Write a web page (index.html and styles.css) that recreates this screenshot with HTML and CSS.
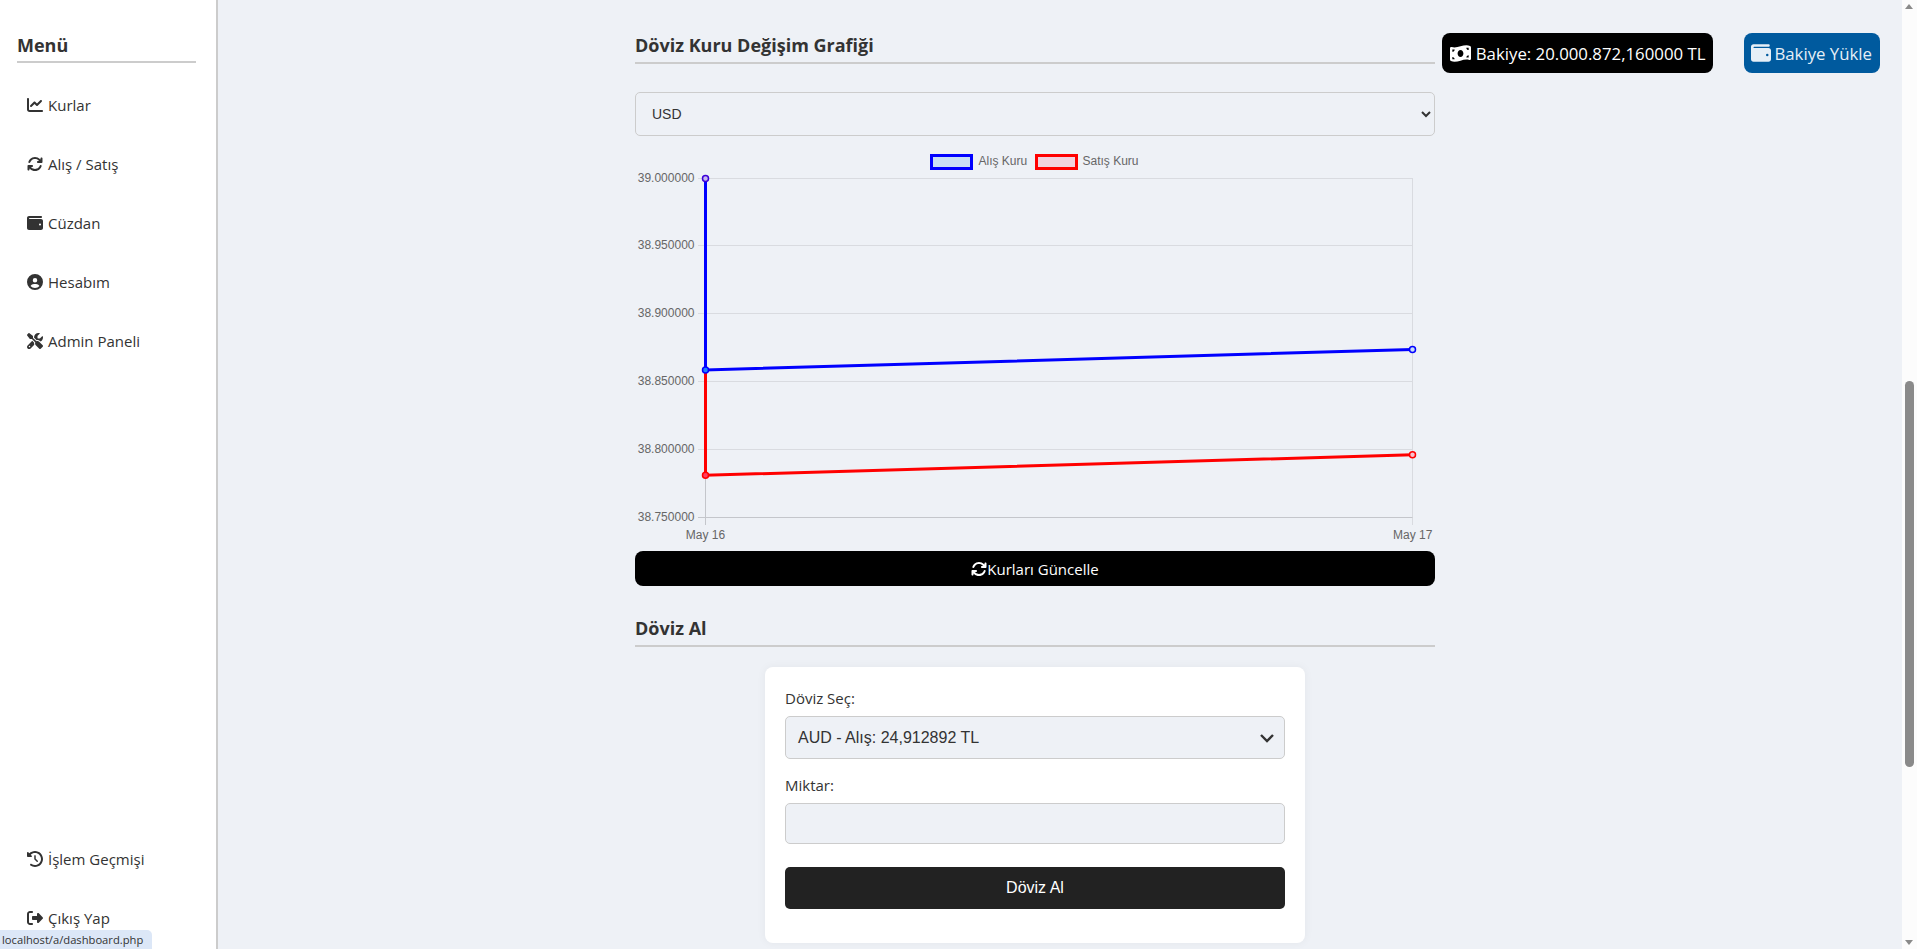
FILE: index.html
```html
<!DOCTYPE html>
<html lang="en">
<head>
<meta charset="UTF-8" />
<title>Dashboard</title>
<link rel="stylesheet" href="styles.css">
</head>
<body>
  <aside class="sidebar">
    <h3 class="sidebar-title">Menü</h3>
    <nav class="menu">
      <a class="menu-item"><svg class="icon" viewBox="0 0 512 512"><path d="M64 64c0-17.7-14.3-32-32-32S0 46.3 0 64V400c0 44.2 35.8 80 80 80H480c17.7 0 32-14.3 32-32s-14.3-32-32-32H80c-8.8 0-16-7.2-16-16V64zm406.6 86.6c12.5-12.5 12.5-32.8 0-45.3s-32.8-12.5-45.3 0L320 210.7l-57.4-57.4c-12.5-12.5-32.8-12.5-45.3 0l-112 112c-12.5 12.5-12.5 32.8 0 45.3s32.8 12.5 45.3 0L240 221.3l57.4 57.4c12.5 12.5 32.8 12.5 45.3 0l128-128z"/></svg>Kurlar</a>
      <a class="menu-item"><svg class="icon" viewBox="0 0 512 512"><path d="M105.1 202.6c7.7-21.8 20.2-42.3 37.8-59.8c62.5-62.5 163.8-62.5 226.3 0L386.3 160H352c-17.7 0-32 14.3-32 32s14.3 32 32 32H463.5c0 0 0 0 0 0h.4c17.7 0 32-14.3 32-32V80c0-17.7-14.3-32-32-32s-32 14.3-32 32v35.2L414.4 97.6c-87.5-87.5-229.3-87.5-316.8 0C73.2 122 55.6 150.7 44.8 181.4c-5.9 16.7 2.9 34.9 19.5 40.8s34.9-2.9 40.8-19.5zM39 289.3c-5 1.5-9.8 4.2-13.7 8.2c-4 4-6.7 8.8-8.1 14c-.3 1.2-.6 2.5-.8 3.8c-.3 1.7-.4 3.4-.4 5.1V432c0 17.7 14.3 32 32 32s32-14.3 32-32V396.9l17.6 17.5 0 0c87.5 87.4 229.3 87.4 316.7 0c24.4-24.4 42.1-53.1 52.9-83.7c5.9-16.7-2.9-34.9-19.5-40.8s-34.9 2.9-40.8 19.5c-7.7 21.8-20.2 42.3-37.8 59.8c-62.5 62.5-163.8 62.5-226.3 0l-.1-.1L125.6 352H160c17.7 0 32-14.3 32-32s-14.3-32-32-32H48.4c-1.6 0-3.2 .1-4.8 .3s-3.1 .5-4.6 1z"/></svg>Alış / Satış</a>
      <a class="menu-item"><svg class="icon" viewBox="0 0 512 512"><path d="M64 32C28.7 32 0 60.7 0 96V416c0 35.3 28.7 64 64 64H448c35.3 0 64-28.7 64-64V192c0-35.3-28.7-64-64-64H80c-8.8 0-16-7.2-16-16s7.2-16 16-16H448c17.7 0 32-14.3 32-32s-14.3-32-32-32H64zM416 272a32 32 0 1 1 0 64 32 32 0 1 1 0-64z"/></svg>Cüzdan</a>
      <a class="menu-item"><svg class="icon" viewBox="0 0 512 512"><path d="M399 384.2C376.9 345.8 335.4 320 288 320H224c-47.4 0-88.9 25.8-111 64.2c35.2 39.2 86.2 63.8 143 63.8s107.8-24.7 143-63.8zM0 256a256 256 0 1 1 512 0A256 256 0 1 1 0 256zm256 16a72 72 0 1 0 0-144 72 72 0 1 0 0 144z"/></svg>Hesabım</a>
      <a class="menu-item"><svg class="icon" viewBox="0 0 512 512"><path d="M78.6 5C69.1-2.4 55.6-1.5 47 7L7 47c-8.5 8.5-9.4 22-2.1 31.6l80 104c4.5 5.9 11.6 9.4 19 9.4h54.1l109 109c-14.7 29-10 65.4 14.3 89.6l112 112c12.5 12.5 32.8 12.5 45.3 0l64-64c12.5-12.5 12.5-32.8 0-45.3l-112-112c-24.2-24.2-60.6-29-89.6-14.3l-109-109V104c0-7.5-3.5-14.5-9.4-19L78.6 5zM19.9 396.1C7.2 408.8 0 426.1 0 444.1C0 481.6 30.4 512 67.9 512c18 0 35.3-7.2 48-19.9L233.7 374.3c-7.8-20.9-9-43.6-3.6-65.1l-61.7-61.7L19.9 396.1zM512 144c0-10.5-1.1-20.7-3.2-30.5c-2.4-11.2-16.1-14.1-24.2-6l-63.9 63.9c-3 3-7.1 4.7-11.3 4.7H352c-8.8 0-16-7.2-16-16V102.6c0-4.2 1.7-8.3 4.7-11.3l63.9-63.9c8.1-8.1 5.2-21.8-6-24.2C388.7 1.1 378.5 0 368 0C288.5 0 224 64.5 224 144l0 .8 85.3 85.3c36-9.1 75.8 .5 104 28.7L429 274.5c49-23 83-72.8 83-130.5zM56 432a24 24 0 1 1 48 0 24 24 0 1 1 -48 0z"/></svg>Admin Paneli</a>
    </nav>
    <nav class="menu menu-bottom">
      <a class="menu-item"><svg class="icon" viewBox="0 0 512 512"><path d="M75 75L41 41C25.9 25.9 0 36.6 0 57.9V168c0 13.3 10.7 24 24 24H134.1c21.4 0 32.1-25.9 17-41l-30.8-30.8C155 85.5 203 64 256 64c106 0 192 86 192 192s-86 192-192 192c-40.8 0-78.6-12.7-109.7-34.4c-14.5-10.1-34.4-6.6-44.6 7.9s-6.6 34.4 7.9 44.6C151.2 495 201.7 512 256 512c141.4 0 256-114.6 256-256S397.4 0 256 0C185.3 0 121.3 28.7 75 75zm181 53c-13.3 0-24 10.7-24 24V256c0 6.4 2.5 12.5 7 17l72 72c9.4 9.4 24.6 9.4 33.9 0s9.4-24.6 0-33.9l-65-65V152c0-13.3-10.7-24-24-24z"/></svg>İşlem Geçmişi</a>
      <a class="menu-item"><svg class="icon" viewBox="0 0 512 512"><path d="M377.9 105.9L500.7 228.7c7.2 7.2 11.3 17.1 11.3 27.3s-4.1 20.1-11.3 27.3L377.9 406.1c-6.4 6.4-15 9.9-24 9.9c-18.7 0-33.9-15.2-33.9-33.9l0-62.1-128 0c-17.7 0-32-14.3-32-32l0-64c0-17.7 14.3-32 32-32l128 0 0-62.1c0-18.7 15.2-33.9 33.9-33.9c9 0 17.6 3.6 24 9.9zM160 96L96 96c-17.7 0-32 14.3-32 32l0 256c0 17.7 14.3 32 32 32l64 0c17.7 0 32 14.3 32 32s-14.3 32-32 32l-64 0c-53 0-96-43-96-96L0 128C0 75 43 32 96 32l64 0c17.7 0 32 14.3 32 32s-14.3 32-32 32z"/></svg>Çıkış Yap</a>
    </nav>
  </aside>

  <main class="content">
    <section class="panel">
      <h2 class="section-title">Döviz Kuru Değişim Grafiği</h2>
      <select class="rate-select"><option>USD</option></select>

      <svg class="chart" viewBox="0 0 800 405" width="800" height="405">
        <g class="legend-text">
          <rect class="swatch-blue" x="296.5" y="9.5" width="40" height="13"/>
          <text x="343.5" y="19">Alış Kuru</text>
          <rect class="swatch-red" x="401.5" y="9.5" width="40" height="13"/>
          <text x="447.5" y="19">Satış Kuru</text>
        </g>
        <g class="grid">
          <path d="M63 32.5H777.5M63 99.5H777.5M63 167.5H777.5M63 235.5H777.5M63 303.5H777.5"/>
          <path d="M777.5 32V379"/>
        </g>
        <path class="axis" d="M63 371.5H777.5M70.5 32V379"/>
        <g class="tick-text" text-anchor="end">
          <text x="59.5" y="36">39.000000</text>
          <text x="59.5" y="103">38.950000</text>
          <text x="59.5" y="171">38.900000</text>
          <text x="59.5" y="239">38.850000</text>
          <text x="59.5" y="307">38.800000</text>
          <text x="59.5" y="375">38.750000</text>
        </g>
        <g class="tick-text" text-anchor="middle">
          <text x="70.5" y="393">May 16</text>
          <text x="758" y="393" text-anchor="start">May 17</text>
        </g>
        <polyline class="line-red" points="70.5,32.5 70.5,329.3 777.5,308.8"/>
        <circle class="pt-red" cx="777.5" cy="308.8" r="3"/>
        <circle class="pt-red-solid" cx="70.5" cy="329.3" r="3"/>
        <polyline class="line-blue" points="70.5,32.5 70.5,224 777.5,203.4"/>
        <circle class="pt-blue" cx="777.5" cy="203.4" r="3"/>
        <circle class="pt-blue-solid" cx="70.5" cy="224" r="3"/>
        <circle class="pt-top" cx="70.5" cy="32.5" r="3"/>
      </svg>

      <button class="refresh-btn"><svg class="icon" viewBox="0 0 512 512"><path d="M105.1 202.6c7.7-21.8 20.2-42.3 37.8-59.8c62.5-62.5 163.8-62.5 226.3 0L386.3 160H352c-17.7 0-32 14.3-32 32s14.3 32 32 32H463.5c0 0 0 0 0 0h.4c17.7 0 32-14.3 32-32V80c0-17.7-14.3-32-32-32s-32 14.3-32 32v35.2L414.4 97.6c-87.5-87.5-229.3-87.5-316.8 0C73.2 122 55.6 150.7 44.8 181.4c-5.9 16.7 2.9 34.9 19.5 40.8s34.9-2.9 40.8-19.5zM39 289.3c-5 1.5-9.8 4.2-13.7 8.2c-4 4-6.7 8.8-8.1 14c-.3 1.2-.6 2.5-.8 3.8c-.3 1.7-.4 3.4-.4 5.1V432c0 17.7 14.3 32 32 32s32-14.3 32-32V396.9l17.6 17.5 0 0c87.5 87.4 229.3 87.4 316.7 0c24.4-24.4 42.1-53.1 52.9-83.7c5.9-16.7-2.9-34.9-19.5-40.8s-34.9 2.9-40.8 19.5c-7.7 21.8-20.2 42.3-37.8 59.8c-62.5 62.5-163.8 62.5-226.3 0l-.1-.1L125.6 352H160c17.7 0 32-14.3 32-32s-14.3-32-32-32H48.4c-1.6 0-3.2 .1-4.8 .3s-3.1 .5-4.6 1z"/></svg>Kurları Güncelle</button>

      <h2 class="section-title buy-title">Döviz Al</h2>
      <form class="buy-card">
        <label class="field-label">Döviz Seç:</label>
        <div class="fake-select">AUD - Alış: 24,912892 TL<svg class="chevron" viewBox="0 0 16 16"><path d="M2 5L8 11l6-6"/></svg></div>
        <label class="field-label amount-label">Miktar:</label>
        <input class="amount-input" type="text">
        <button class="buy-btn" type="button">Döviz Al</button>
      </form>
    </section>
  </main>

  <div class="balance-bar">
    <span class="pill pill-balance"><svg class="icon icon-wide" viewBox="0 0 576 512"><path d="M0 112.5V422.3c0 18 10.1 35 27 41.3c87 32.5 174 10.3 261-11.9c79.8-20.3 159.6-40.7 239.3-18.9c23 6.3 48.7-9.5 48.7-33.4V89.7c0-18-10.1-35-27-41.3C462 15.9 375 38.1 288 60.3C208.2 80.6 128.4 100.9 48.7 79.1C25.6 72.8 0 88.6 0 112.5zM288 352c-44.2 0-80-43-80-96s35.8-96 80-96s80 43 80 96s-35.8 96-80 96zM64 352c35.3 0 64 28.7 64 64H64V352zm64-208c0 35.3-28.7 64-64 64V144h64zM512 304v64H448c0-35.3 28.7-64 64-64zM448 96h64v64c-35.3 0-64-28.7-64-64z"/></svg>Bakiye: 20.000.872,160000 TL</span>
    <span class="pill pill-load"><svg class="icon icon-load" viewBox="0 0 512 512"><path d="M64 32C28.7 32 0 60.7 0 96V416c0 35.3 28.7 64 64 64H448c35.3 0 64-28.7 64-64V192c0-35.3-28.7-64-64-64H80c-8.8 0-16-7.2-16-16s7.2-16 16-16H448c17.7 0 32-14.3 32-32s-14.3-32-32-32H64zM416 272a32 32 0 1 1 0 64 32 32 0 1 1 0-64z"/></svg>Bakiye Yükle</span>
  </div>

  <div class="scrollbar"><div class="scrollbar-thumb"></div></div>
  <div class="status-link">localhost/a/dashboard.php</div>
</body>
</html>
```

FILE: styles.css
```css
* {
  box-sizing: border-box;
}
html, body {
  height: 100%;
}
body {
  margin: 0;
  display: flex;
  background: #eef1f6;
  color: #333;
  font-family: "Open Sans", sans-serif;
  overflow: hidden;
}
.icon {
  width: 16px;
  height: 16px;
  fill: currentColor;
  flex: none;
}

/* Sidebar */
.sidebar {
  width: 218px;
  flex: none;
  height: 100%;
  background: #fff;
  border-right: 2px solid #ccc;
  padding: 33px 20px 0 17px;
  display: flex;
  flex-direction: column;
}
.sidebar-title {
  margin: 0;
  font-size: 18px;
  line-height: 24px;
  height: 30px;
  color: #333;
  border-bottom: 2px solid #ccc;
}
.menu {
  display: flex;
  flex-direction: column;
  margin-top: 12px;
}
.menu-bottom {
  margin-top: auto;
  margin-bottom: 2px;
}
.menu-item {
  height: 59px;
  display: flex;
  align-items: center;
  gap: 5px;
  padding-left: 10px;
  font-size: 15px;
  color: #333;
}

/* Main column */
.content {
  flex: 1;
  display: flex;
  justify-content: center;
  padding-right: 65px;
}
.panel {
  width: 800px;
  padding-top: 33px;
}
.section-title {
  margin: 0;
  font-size: 18px;
  line-height: 25px;
  height: 31px;
  color: #333;
  border-bottom: 2px solid #ccc;
}
.rate-select {
  display: block;
  width: 100%;
  height: 44px;
  margin-top: 28px;
  padding: 0 12px;
  background: #eef1f6;
  border: 1px solid #ccc;
  border-radius: 5px;
  color: #333;
  font-family: "Liberation Sans", sans-serif;
  font-size: 14px;
}
.chart {
  display: block;
  margin-top: 10px;
}
.legend-text text, .tick-text text {
  font-family: "Liberation Sans", sans-serif;
  font-size: 12px;
  fill: #666;
}
.swatch-blue {
  fill: #c9dff5;
  stroke: #0000ff;
  stroke-width: 3;
}
.swatch-red {
  fill: #f1d3df;
  stroke: #ff0000;
  stroke-width: 3;
}
.grid path {
  fill: none;
  stroke: #d9dbe0;
}
.axis {
  fill: none;
  stroke: #c4c6cb;
}
.line-blue, .line-red {
  fill: none;
  stroke-width: 3;
}
.line-blue {
  stroke: #0000ff;
}
.line-red {
  stroke: #ff0000;
}
.pt-blue, .pt-blue-solid, .pt-red, .pt-red-solid, .pt-top {
  stroke-width: 1.5;
}
.pt-blue {
  fill: #c9dff5;
  stroke: #0000ff;
}
.pt-blue-solid {
  fill: #1e80ff;
  stroke: #0000ff;
}
.pt-red {
  fill: #f7c3cf;
  stroke: #ff0000;
}
.pt-red-solid {
  fill: #ff3f5f;
  stroke: #ff0000;
}
.pt-top {
  fill: #c8b8f0;
  stroke: #3c00d8;
}
.refresh-btn {
  display: flex;
  align-items: center;
  justify-content: center;
  width: 100%;
  height: 35px;
  background: #000;
  color: #fff;
  border: 0;
  border-radius: 8px;
  font-family: "Open Sans", sans-serif;
  font-size: 15px;
}
.buy-title {
  margin-top: 30px;
}
.buy-card {
  width: 540px;
  margin: 20px auto 0;
  height: 276px;
  padding: 20px;
  background: #fff;
  border-radius: 8px;
  box-shadow: 0 0 10px rgba(0,0,0,0.05);
  display: flex;
  flex-direction: column;
}
.field-label {
  font-size: 15px;
  line-height: 22px;
  color: #333;
}
.fake-select {
  height: 43px;
  margin-top: 7px;
  padding: 0 9px 0 12px;
  display: flex;
  align-items: center;
  justify-content: space-between;
  background: #eef1f6;
  border: 1px solid #ccc;
  border-radius: 5px;
  font-family: "Liberation Sans", sans-serif;
  font-size: 16px;
  color: #333;
}
.chevron {
  width: 16px;
  height: 16px;
  fill: none;
  stroke: #333;
  stroke-width: 2.4;
}
.amount-label {
  margin-top: 15px;
}
.amount-input {
  height: 41px;
  margin-top: 7px;
  background: #eef1f6;
  border: 1px solid #ccc;
  border-radius: 5px;
}
.buy-btn {
  height: 42px;
  margin-top: 23px;
  background: #222;
  color: #fff;
  border: 0;
  border-radius: 5px;
  font-family: "Liberation Sans", sans-serif;
  font-size: 16px;
}

/* Fixed balance buttons */
.balance-bar {
  position: absolute;
  top: 33px;
  right: 37px;
  display: flex;
  gap: 31px;
}
.pill {
  height: 40px;
  padding: 0 8px;
  display: flex;
  align-items: center;
  gap: 5px;
  border-radius: 8px;
  color: #fff;
  font-size: 16.8px;
}
.pill-balance {
  background: #000;
}
.pill-load {
  background: #005a9e;
  color: #e6eff7;
  gap: 3px;
  padding-left: 7px;
}
.icon-wide {
  width: 21px;
  height: 19px;
}
.icon-load {
  width: 20px;
  height: 20px;
}

/* Browser chrome */
.scrollbar {
  position: absolute;
  top: 0;
  right: 0;
  bottom: 0;
  width: 15px;
  background: #fcfcfc;
  padding: 381px 3px 0;
}
.scrollbar::before, .scrollbar::after {
  content: "";
  position: absolute;
  left: 3px;
  border-left: 4.5px solid transparent;
  border-right: 4.5px solid transparent;
}
.scrollbar::before {
  top: 4px;
  border-bottom: 5px solid #8a8a8a;
}
.scrollbar::after {
  bottom: 4px;
  border-top: 5px solid #8a8a8a;
}
.scrollbar-thumb {
  height: 386px;
  background: #8a8a8a;
  border-radius: 5px;
}
.status-link {
  position: absolute;
  left: 0;
  bottom: 0;
  height: 19px;
  width: 152px;
  padding-left: 2px;
  background: #dce7f7;
  border-top-right-radius: 5px;
  font-size: 11.2px;
  line-height: 19px;
  color: #333;
}
```
